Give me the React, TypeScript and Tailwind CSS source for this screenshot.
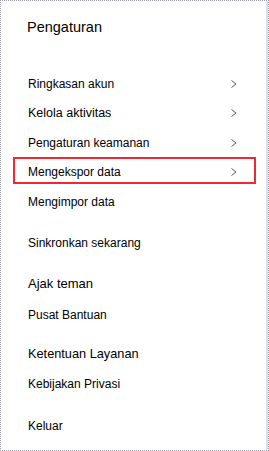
import { ReactNode } from 'react';

type Item = {
  label: string;
  size: string;
  gap?: string;
  chevron?: boolean;
  highlight?: boolean;
};

const items: Item[] = [
  { label: 'Ringkasan akun', size: 'text-[12px]', chevron: true },
  { label: 'Kelola aktivitas', size: 'text-[12.5px]', chevron: true },
  { label: 'Pengaturan keamanan', size: 'text-[12px]', chevron: true },
  { label: 'Mengekspor data', size: 'text-[12px]', chevron: true, highlight: true },
  { label: 'Mengimpor data', size: 'text-[12px]' },
  { label: 'Sinkronkan sekarang', size: 'text-[12px]', gap: 'mt-[12px]' },
  { label: 'Ajak teman', size: 'text-[13px]', gap: 'mt-[11px]' },
  { label: 'Pusat Bantuan', size: 'text-[12px]', gap: 'mt-[1.5px]' },
  { label: 'Ketentuan Layanan', size: 'text-[12.75px]', gap: 'mt-[10.5px]' },
  { label: 'Kebijakan Privasi', size: 'text-[12px]' },
  { label: 'Keluar', size: 'text-[12px]', gap: 'mt-[12.5px]' },
];

function Chevron() {
  return (
    <svg width="6" height="8" viewBox="0 0 6 8" className="shrink-0">
      <polyline points="0.5,0.5 5,4 0.5,7.5" fill="none" stroke="#555" strokeWidth="1" />
    </svg>
  );
}

function Row({ item }: { item: Item }): ReactNode {
  return (
    <div className={`relative flex h-[29.5px] items-center justify-between pl-[27px] pr-[29px] ${item.gap ?? ''}`}>
      <span className={`${item.size} leading-none text-black`}>{item.label}</span>
      {item.chevron && <Chevron />}
      {item.highlight && (
        <div className="pointer-events-none absolute left-[12px] top-[-0.5px] h-[26.5px] w-[243px] border-2 border-[#f02836]" />
      )}
    </div>
  );
}

export default function App() {
  return (
    <div className="h-[451px] w-[269px] border border-dotted border-[#9c9ca8] bg-white font-['Liberation_Sans',Arial,sans-serif]">
      <div className="flex h-full flex-col border-r-2 border-[#dcdcf8]">
        <div className="flex h-[54px] items-center pl-[26px] text-[14.5px] text-black">Pengaturan</div>
        <div className="mt-[14px] flex flex-col">
          {items.map((item) => (
            <Row key={item.label} item={item} />
          ))}
        </div>
      </div>
    </div>
  );
}
